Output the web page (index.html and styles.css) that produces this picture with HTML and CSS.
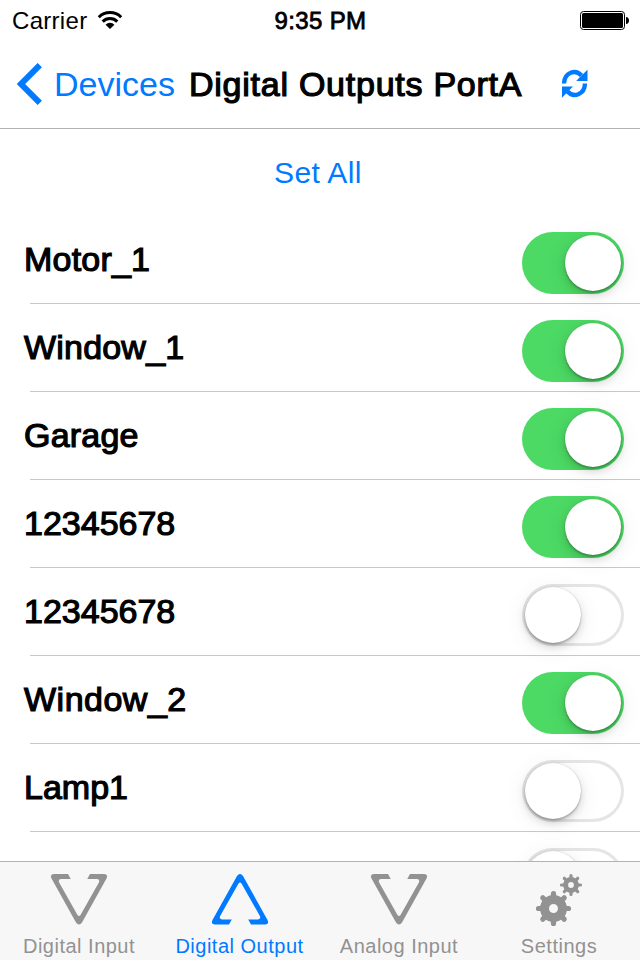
FILE: index.html
```html
<!DOCTYPE html>
<html lang="en">
<head>
<meta charset="utf-8">
<title>Digital Outputs PortA</title>
<link rel="stylesheet" href="styles.css">
</head>
<body>
<div class="screen">
  <header class="top">
    <div class="status">
      <div class="carrier"><span class="carrier-name">Carrier</span>
        <svg class="wifi" width="26" height="18" viewBox="0 0 26 18"><g fill="none" stroke="#000" stroke-width="3"><path d="M1.800 6.200a15.800 15.800 0 0 1 22.400 0"/><path d="M5.700 10.600a10.300 10.300 0 0 1 14.600 0"/></g><path d="M13 17.900l-4.400-4.200a6 6 0 0 1 8.800 0z"/></svg>
      </div>
      <div class="clock medium"><span>9:35 PM</span></div>
      <svg class="battery" width="49" height="19" viewBox="0 0 49 19"><rect x=".5" y=".5" width="44" height="18" rx="3" fill="none" stroke="#000"/><rect x="2" y="2" width="41" height="15" rx="1.5"/><path d="M46 6c4 0 4 7 0 7z"/></svg>
    </div>
    <nav class="nav">
      <a class="back"><svg width="28" height="44" viewBox="0 0 28 44"><path d="M25.800 3.200L7 22L25.800 40.800" fill="none" stroke="#007aff" stroke-width="6"/></svg><span>Devices</span></a>
      <h1 class="title medium"><span>Digital Outputs PortA</span></h1>
      <svg class="refresh" width="27" height="30" viewBox="0 0 27 30"><g fill="none" stroke="#007aff" stroke-width="4.400"><path d="M3 14.500C3.500 3 14.500 0 20.500 6.500"/><path d="M24 14.500C23.500 26 12.500 29 6.500 22.500"/></g><path d="M26.500 .8V12H15.200L18.500 8.500zM1 28.700V17.500H12L8.500 21z" fill="#007aff"/></svg>
    </nav>
  </header>
  <main class="content">
    <a class="set-all"><span>Set All</span></a>
    <ul class="list medium">
      <li class="row"><span class="label">Motor_1</span><i class="switch on"></i></li>
      <li class="row"><span class="label">Window_1</span><i class="switch on"></i></li>
      <li class="row"><span class="label">Garage</span><i class="switch on"></i></li>
      <li class="row"><span class="label digits">12345678</span><i class="switch on"></i></li>
      <li class="row"><span class="label digits">12345678</span><i class="switch"></i></li>
      <li class="row"><span class="label wide">Window_2</span><i class="switch on"></i></li>
      <li class="row"><span class="label digits">Lamp1</span><i class="switch"></i></li>
      <li class="row"><span class="label"></span><i class="switch"></i></li>
    </ul>
  </main>
  <footer class="tabs">
    <a class="tab"><svg width="58" height="52" viewBox="0 0 58 52"><path d="M18 1H4Q-.5 1.500 1.500 5.500L26 49.500Q29 53.500 32 49.500L56.500 5.500Q58.500 1.500 54 1H40L37.200 6H47Q50 6.300 49 9.300L30.500 42Q29 44 27.500 42L9 9.300Q8 6.300 11 6H20.800Z"/></svg><span>Digital Input</span></a>
    <a class="tab active"><svg width="58" height="52" viewBox="0 0 58 52"><path transform="matrix(1 0 0 -1 0 52.500)" d="M18 1H4Q-.5 1.500 1.500 5.500L26 49.500Q29 53.500 32 49.500L56.500 5.500Q58.500 1.500 54 1H40L37.200 6H47Q50 6.300 49 9.300L30.500 42Q29 44 27.500 42L9 9.300Q8 6.300 11 6H20.800Z"/></svg><span>Digital Output</span></a>
    <a class="tab"><svg width="58" height="52" viewBox="0 0 58 52"><path d="M18 1H4Q-.5 1.500 1.500 5.500L26 49.500Q29 53.500 32 49.500L56.500 5.500Q58.500 1.500 54 1H40L37.200 6H47Q50 6.300 49 9.300L30.500 42Q29 44 27.500 42L9 9.300Q8 6.300 11 6H20.800Z"/></svg><span>Analog Input</span></a>
    <a class="tab"><svg width="58" height="54" viewBox="0 0 58 54">
      <g transform="translate(23.500 35.500)"><circle r="9" fill="none" stroke="#929292" stroke-width="9"/><path d="M0-9V-15M0 9V15M-9 0H-15M9 0H15M-7-7L-10.700-10.700M7-7L10.700-10.700M-7 7L-10.700 10.700M7 7L10.700 10.700" stroke="#929292" stroke-width="5.200" stroke-linecap="round"/></g>
      <g transform="translate(41 12)"><circle r="5.400" fill="none" stroke="#929292" stroke-width="5"/><path d="M0-6V-9.500M0 6V9.500M-6 0H-9.500M6 0H9.500M-4-4L-6.700-6.700M4-4L6.700-6.700M-4 4L-6.700 6.700M4 4L6.700 6.700" stroke="#929292" stroke-width="3.200" stroke-linecap="round"/></g>
    </svg><span class="settings">Settings</span></a>
  </footer>
</div>
</body>
</html>
```
FILE: styles.css
```css
* { box-sizing: border-box; }
body { margin: 0; background: #fff; color: #000; font-family: "Liberation Sans", Arial, sans-serif; }
svg { display: block; flex: none; }
span { white-space: nowrap; }
.screen { width: 640px; height: 960px; display: flex; flex-direction: column; overflow: hidden; }
.medium { font-weight: 400; -webkit-text-stroke: 1.2px currentColor; }
.top { height: 129px; flex: none; border-bottom: 1px solid #b2b2b2; }
.status { height: 40px; display: grid; grid-template-columns: 1fr auto 1fr; align-items: center; padding: 0 11px 0 12px; font-size: 24px; }
.carrier { display: flex; align-items: center; gap: 10px; }
.carrier-name { letter-spacing: .3px; padding-top: 1px; }
.clock { letter-spacing: .35px; padding-top: 1px; -webkit-text-stroke-width: .8px; }
.battery { justify-self: end; }
.nav { height: 88px; display: flex; align-items: center; padding-left: 14px; font-size: 34px; }
.back { display: flex; align-items: center; color: #007aff; width: 175px; gap: 12px; }
.title { margin: 0; font-size: 34px; width: 372px; letter-spacing: .75px; }
.content { flex: 1; min-height: 0; overflow: hidden; }
.set-all { height: 87px; display: flex; justify-content: center; align-items: center; color: #007aff; font-size: 30px; letter-spacing: .4px; padding-right: 4px; }
.list { margin: 0; padding: 0; list-style: none; }
.row { height: 88px; display: flex; justify-content: space-between; align-items: flex-start; padding: 16px 16px 0 24px; background: linear-gradient(#c8c7cc, #c8c7cc) 30px 87px / 610px 1px no-repeat; }
.label { font-size: 34px; line-height: 54px; letter-spacing: .2px; }
.label.digits { letter-spacing: 0; }
.label.wide { letter-spacing: .5px; }
.switch { width: 102px; height: 62px; border-radius: 31px; padding: 3px; box-shadow: inset 0 0 0 3px #e5e5e5; display: flex; }
.switch::before { content: ""; width: 56px; height: 56px; border-radius: 50%; background: #fff; box-shadow: 0 4px 8px rgba(0,0,0,.15), 0 2px 2px rgba(0,0,0,.2), 0 0 1px rgba(0,0,0,.25), 0 4px 26px rgba(0,0,0,.07); }
.switch.on { background: #4cd964; box-shadow: none; justify-content: flex-end; }
.tabs { height: 99px; flex: none; display: grid; grid-template-columns: repeat(4, 160px); border-top: 1px solid #b2b2b2; background: #f7f7f7; position: relative; }
.tab { display: flex; flex-direction: column; align-items: center; padding: 11px 2px 0 0; color: #929292; fill: currentColor; font-size: 20px; }
.tab.active { padding-right: 1px; color: #007aff; }
.tab span { line-height: 24px; margin-top: 9px; letter-spacing: .5px; }
.tab .settings { margin-top: 7px; }
```
